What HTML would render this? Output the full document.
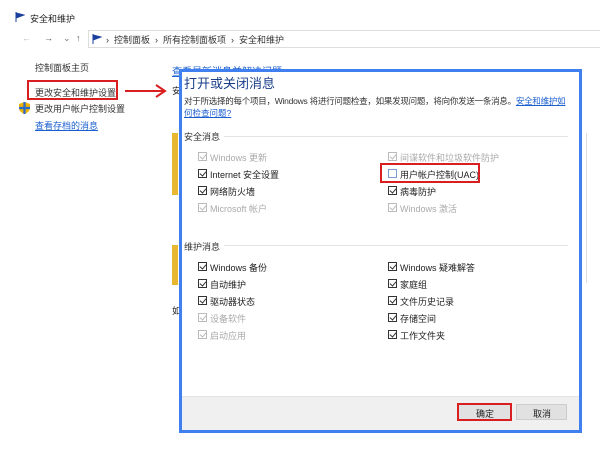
<!DOCTYPE html>
<html><head><meta charset="utf-8"><style>
*{margin:0;padding:0;box-sizing:border-box}
body{width:600px;height:460px;background:#fff;position:relative;overflow:hidden;font-family:"Liberation Sans","Noto Sans CJK SC",sans-serif;color:#222}
.a{position:absolute;white-space:nowrap}
.s{font-size:9px}
.cb{position:absolute;width:9px;height:9px;border:1px solid #333;background:#fff}
.cb::after{content:"";position:absolute;left:2px;top:0px;width:3px;height:5px;border:solid #333;border-width:0 1px 1px 0;transform:rotate(40deg)}
.cb.u::after{display:none}
.g{border-color:#bbb}.g::after{border-color:#bbb}
.gt{color:#aaa}
.lnk{color:#1a5fd0;text-decoration:underline}
</style></head><body>
<svg class="a" style="left:15px;top:12px" width="10" height="10"><path d="M1 0V10M1 1L9 3 1 6" fill="#1b3f9c" stroke="#1b3f9c"/></svg>
<div class="a s" style="left:30px;top:12px">安全和维护</div>
<div class="a s" style="left:22px;top:33px;color:#bbb">←</div>
<div class="a s" style="left:44px;top:33px;color:#555">→</div>
<div class="a s" style="left:63px;top:33px;color:#777">⌄</div>
<div class="a s" style="left:76px;top:33px;color:#555">↑</div>
<div class="a" style="left:88px;top:30px;width:520px;height:18px;border:1px solid #ddd"></div>
<svg class="a" style="left:92px;top:34px" width="10" height="10"><path d="M1 0V10M1 1L9 3 1 6" fill="#1b3f9c" stroke="#1b3f9c"/></svg>
<div class="a s" style="left:106px;top:33px;color:#333">›&nbsp; 控制面板 &nbsp;›&nbsp; 所有控制面板项 &nbsp;›&nbsp; 安全和维护</div>
<div class="a s" style="left:35px;top:61px;color:#333">控制面板主页</div>
<div class="a s" style="left:35px;top:86px;color:#333">更改安全和维护设置</div>
<div class="a" style="left:27px;top:80px;width:91px;height:20px;border:2px solid #d81e1e"></div>
<svg class="a" style="left:124px;top:84px" width="44" height="14"><path d="M1 7H40M32 1L41 7 32 13" fill="none" stroke="#d81e1e" stroke-width="2"/></svg>
<svg class="a" style="left:19px;top:102px" width="11" height="12"><path d="M5.5 0L11 2V6C11 9 8 11 5.5 12 3 11 0 9 0 6V2Z" fill="#f0b400"/><path d="M5.5 0V12M0 6H11" stroke="#2a6acb" stroke-width="2.2"/></svg>
<div class="a s" style="left:35px;top:102px;color:#333">更改用户帐户控制设置</div>
<div class="a s lnk" style="left:35px;top:119px">查看存档的消息</div>
<div class="a s lnk" style="left:172px;top:63px;font-size:10px">查看最新消息并解决问题</div>
<div class="a s" style="left:172px;top:84px">安</div>
<div class="a s" style="left:172px;top:304px">如</div>
<div class="a" style="left:172px;top:133px;width:6px;height:62px;background:#e8b830"></div>
<div class="a" style="left:172px;top:245px;width:6px;height:40px;background:#e8b830"></div>
<div class="a" style="left:586px;top:133px;width:1px;height:150px;background:#ddd"></div>
<div class="a" style="left:179px;top:69px;width:403px;height:364px;border:3px solid #3f7ff0;background:#fff"></div>
<div class="a" style="left:182px;top:396px;width:397px;height:34px;background:#f0f0f0;border-top:1px solid #e4e4e4"></div>
<div class="a" style="left:184px;top:73px;font-size:13px;color:#1a3d8a">打开或关闭消息</div>
<div class="a s" style="left:184px;top:95px;color:#333;font-size:8.5px;letter-spacing:-0.25px">对于所选择的每个项目，Windows 将进行问题检查，如果发现问题，将向你发送一条消息。<span class="lnk">安全和维护如</span></div>
<div class="a s lnk" style="left:184px;top:107px;font-size:8.5px">何检查问题?</div>
<div class="a s" style="left:184px;top:130px;color:#333">安全消息</div>
<div class="a" style="left:224px;top:136px;width:344px;height:1px;background:#e4e4e4"></div>
<div class="cb g" style="left:198px;top:152px"></div><div class="a s gt" style="left:210px;top:151px">Windows 更新</div>
<div class="cb" style="left:198px;top:169px"></div><div class="a s" style="left:210px;top:168px">Internet 安全设置</div>
<div class="cb" style="left:198px;top:186px"></div><div class="a s" style="left:210px;top:185px">网络防火墙</div>
<div class="cb g" style="left:198px;top:203px"></div><div class="a s gt" style="left:210px;top:202px">Microsoft 帐户</div>
<div class="cb g" style="left:388px;top:152px"></div><div class="a s gt" style="left:400px;top:151px">间谍软件和垃圾软件防护</div>
<div class="cb u" style="left:388px;top:169px;border-color:#7a9ad0"></div><div class="a s" style="left:400px;top:168px">用户帐户控制(UAC)</div>
<div class="a" style="left:380px;top:163px;width:100px;height:20px;border:2px solid #d81e1e"></div>
<div class="cb" style="left:388px;top:186px"></div><div class="a s" style="left:400px;top:185px">病毒防护</div>
<div class="cb g" style="left:388px;top:203px"></div><div class="a s gt" style="left:400px;top:202px">Windows 激活</div>
<div class="a s" style="left:184px;top:240px;color:#333">维护消息</div>
<div class="a" style="left:224px;top:245px;width:344px;height:1px;background:#e4e4e4"></div>
<div class="cb" style="left:198px;top:262px"></div><div class="a s" style="left:210px;top:261px">Windows 备份</div>
<div class="cb" style="left:198px;top:279px"></div><div class="a s" style="left:210px;top:278px">自动维护</div>
<div class="cb" style="left:198px;top:296px"></div><div class="a s" style="left:210px;top:295px">驱动器状态</div>
<div class="cb g" style="left:198px;top:313px"></div><div class="a s gt" style="left:210px;top:312px">设备软件</div>
<div class="cb g" style="left:198px;top:330px"></div><div class="a s gt" style="left:210px;top:329px">启动应用</div>
<div class="cb" style="left:388px;top:262px"></div><div class="a s" style="left:400px;top:261px">Windows 疑难解答</div>
<div class="cb" style="left:388px;top:279px"></div><div class="a s" style="left:400px;top:278px">家庭组</div>
<div class="cb" style="left:388px;top:296px"></div><div class="a s" style="left:400px;top:295px">文件历史记录</div>
<div class="cb" style="left:388px;top:313px"></div><div class="a s" style="left:400px;top:312px">存储空间</div>
<div class="cb" style="left:388px;top:330px"></div><div class="a s" style="left:400px;top:329px">工作文件夹</div>
<div class="a" style="left:457px;top:403px;width:55px;height:18px;border:2px solid #d81e1e;background:#e1e1e1"></div>
<div class="a s" style="left:476px;top:407px">确定</div>
<div class="a" style="left:516px;top:404px;width:51px;height:16px;border:1px solid #ccc;background:#e1e1e1"></div>
<div class="a s" style="left:533px;top:407px">取消</div>
</body></html>
